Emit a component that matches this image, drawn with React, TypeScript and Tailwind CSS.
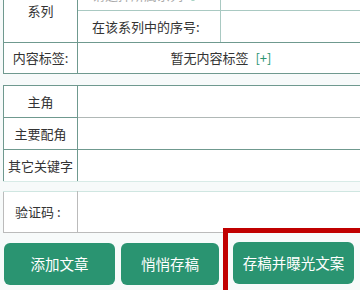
import { HelpCircle } from 'lucide-react';

const font = { fontFamily: '"Noto Sans CJK SC", "Noto Sans", sans-serif' };

export default function App() {
  return (
    <div className="w-[360px] h-[290px] overflow-hidden bg-[#f7fafa] text-[#333]" style={font}>
      {/* 系列 / 内容标签 */}
      <div className="-mt-[22px] pl-[3px]">
        <table className="w-[370px] border-collapse bg-white text-[13px]">
          <tbody>
            <tr className="h-[32px]">
              <td rowSpan={2} className="w-[74px] border border-[#6f998f] text-center">系列</td>
              <td className="w-[143px] border border-[#a9c9c2] pl-[14px] text-[#aaa]">
                <span className="inline-flex items-center gap-1">
                  请选择所属系列
                  <HelpCircle className="w-3 h-3 text-[#2a9471]" />
                </span>
              </td>
              <td className="border border-[#a9c9c2]"></td>
            </tr>
            <tr className="h-[32px]">
              <td className="border border-[#a9c9c2] border-b-[#6f998f] pl-[14px] whitespace-nowrap">在该系列中的序号:</td>
              <td className="border border-[#a9c9c2] border-b-[#6f998f]"></td>
            </tr>
            <tr className="h-[31px]">
              <td className="border border-[#6f998f] text-center">内容标签:</td>
              <td colSpan={2} className="border border-[#6f998f] text-center pr-[8px]">
                暂无内容标签 <span className="ml-1 text-[#2a9471]">[+]</span>
              </td>
            </tr>
          </tbody>
        </table>
      </div>

      {/* 角色 / 关键字 */}
      <div className="mt-[11px] pl-[3px]">
        <table className="w-[370px] border-collapse bg-white text-[13px]">
          <tbody>
            {['主角', '主要配角', '其它关键字'].map((label, i) => (
              <tr key={label} className="h-[32px]">
                <td className={`w-[74px] border border-[#6f998f] text-center ${i === 2 ? 'border-b-[#d8ebe7]' : ''}`}>{label}</td>
                <td className={`border border-[#6f998f] ${i === 0 ? 'border-b-[#b0b8b6]' : ''} ${i === 2 ? 'border-b-[#d8ebe7]' : ''}`}></td>
              </tr>
            ))}
          </tbody>
        </table>
      </div>

      {/* 验证码 */}
      <div className="mt-[9px] pl-[3px]">
        <table className="w-[370px] border-collapse bg-white text-[13px]">
          <tbody>
            <tr className="h-[41px]">
              <td className="w-[74px] border border-[#bbb] border-t-[#cfe6e1] pl-[11px]">验证码 :</td>
              <td className="border border-[#bbb] border-t-[#cfe6e1] border-l-[#7fa79d]"></td>
            </tr>
          </tbody>
        </table>
      </div>

      {/* 按钮 */}
      <div className="flex items-start mt-[-5px] pl-[4px]">
        <button className="shrink-0 mt-[15px] w-[111px] h-[42px] rounded-[6px] bg-[#2a9471] text-white text-[14.5px]">添加文章</button>
        <button className="shrink-0 mt-[15px] ml-[6px] w-[98px] h-[42px] rounded-[6px] bg-[#2a9471] text-white text-[14.5px]">悄悄存稿</button>
        <div className="shrink-0 ml-[4px] border-[5px] border-[#c00000] pt-[9px] pl-[5px] pr-[20px] pb-[10px]">
          <button className="w-[121px] h-[42px] rounded-[6px] bg-[#2a9471] text-white text-[14.5px]">存稿并曝光文案</button>
        </div>
      </div>
    </div>
  );
}
